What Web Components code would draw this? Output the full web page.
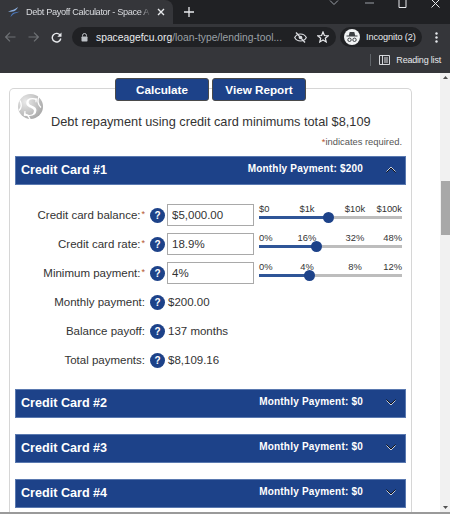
<!DOCTYPE html>
<html>
<head>
<meta charset="utf-8">
<style>
  html, body { margin: 0; height: 100%; overflow: hidden; background: #fff; }
  body { font-family: "Liberation Sans", Arial, sans-serif; color: #333; display: flex; flex-direction: column; height: 514px; }
</style>
</head>
<body>
<browser-chrome></browser-chrome>
<page-view>
  <calc-actions></calc-actions>
  <calc-card>
    <card-panel title-text="Credit Card #1" payment="Monthly Payment: $200" open>
      <field-row label="Credit card balance:" required value="$5,000.00" ticks="$0,$1k,$10k,$100k" pos="48.3"></field-row>
      <field-row label="Credit card rate:" required value="18.9%" ticks="0%,16%,32%,48%" pos="39.9"></field-row>
      <field-row label="Minimum payment:" required value="4%" ticks="0%,4%,8%,12%" pos="35"></field-row>
      <field-row label="Monthly payment:" result="$200.00"></field-row>
      <field-row label="Balance payoff:" result="137 months"></field-row>
      <field-row label="Total payments:" result="$8,109.16"></field-row>
    </card-panel>
    <card-panel title-text="Credit Card #2" payment="Monthly Payment: $0"></card-panel>
    <card-panel title-text="Credit Card #3" payment="Monthly Payment: $0"></card-panel>
    <card-panel title-text="Credit Card #4" payment="Monthly Payment: $0"></card-panel>
  </calc-card>
</page-view>

<script>
const chromeTemplate = document.createElement('template');
chromeTemplate.innerHTML = `
  <style>
    :host { display: block; flex: none; height: 73px; background: #35363a; color: #e8eaed; font-family: "Liberation Sans", sans-serif; font-size: 10px; }
    .tabs { height: 24px; background: #202124; display: flex; align-items: stretch; overflow: hidden; }
    .tab { width: 173px; background: #35363a; border-radius: 0 8px 0 0; display: flex; align-items: center; padding: 0 8px 0 8px; box-sizing: border-box; gap: 6px; }
    .tab .name { flex: 1; white-space: nowrap; color: #dadce0; font-size: 9.200px; letter-spacing: -.35px; -webkit-mask-image: linear-gradient(90deg, #000 92%, transparent); }
    .plus { width: 30px; display: flex; align-items: center; justify-content: center; margin-left: 1px; }
    .spacer { flex: 1; }
    .win { display: flex; align-items: center; height: 12px; gap: 22px; padding-right: 10px; margin-top: -3px; }
    .bar { height: 26px; display: flex; align-items: center; padding: 0 5px; }
    .nav { display: flex; gap: 12px; align-items: center; width: 67px; }
    .omni { width: 264px; height: 20px; background: #202124; border-radius: 10px; display: flex; align-items: center; padding: 0 7px 0 9px; box-sizing: border-box; gap: 8px; }
    .url { flex: 1; white-space: nowrap; color: #9aa0a6; font-size: 10.300px; }
    .url b { color: #e8eaed; font-weight: 400; }
    .omni .eye { margin-right: 2px; }
    .badge { margin-left: 4px; height: 20px; width: 82px; border-radius: 10px; background: #202124; display: flex; align-items: center; gap: 6px; padding-left: 4px; box-sizing: border-box; font-size: 9.200px; letter-spacing: -.1px; white-space: nowrap; }
    .dots { margin-left: 13px; }
    .marks { height: 23px; padding: 0 9px 3px 0; box-sizing: border-box; display: flex; justify-content: flex-end; align-items: center; font-size: 9px; letter-spacing: -.2px; }
    .sep { width: 1px; height: 12px; background: #5f6368; margin-right: 8px; }
    .marks svg { margin-right: 6px; }
  </style>
  <div class="tabs">
    <div class="tab">
      <svg width="12" height="10" viewBox="0 0 12 10"><path d="M0 5C2 3 5 3.500 7 2L10 0C9 2 8 3.500 6 4.200 4 4.800 2 4.600 0 5Z" fill="#8db1e2"/><path d="M12 4.500C10 6 7 5.800 5 7.500L2.500 10C3 8 4 6.500 6 5.600 8 4.800 10 5 12 4.500Z" fill="#4a78bd"/></svg>
      <span class="name">Debt Payoff Calculator - Space A</span>
      <svg width="8" height="8" viewBox="0 0 8 8"><path d="M1 1 7 7M7 1 1 7" stroke="#e8eaed" stroke-width="1.4"/></svg>
    </div>
    <div class="plus"><svg width="10" height="10" viewBox="0 0 10 10"><path d="M5 0V10M0 5H10" stroke="#e8eaed" stroke-width="1.3"/></svg></div>
    <div class="spacer"></div>
    <div class="win">
      <svg width="10" height="6" viewBox="0 0 10 6"><path d="M1 .5 5 4.500 9 .5" fill="none" stroke="#9aa0a6"/></svg>
      <svg width="9" height="2" viewBox="0 0 9 2" style="margin-left:4px"><path d="M0 1H9" stroke="#9aa0a6"/></svg>
      <svg width="9" height="9" viewBox="0 0 9 9" style="margin-left:2px"><path d="M1 .5H8V8.500H1Z" fill="none" stroke="#e8eaed"/></svg>
      <svg width="9" height="9" viewBox="0 0 9 9" style="margin-left:2px"><path d="M.5 .5 8.500 8.500M8.500 .5 .5 8.500" stroke="#e8eaed"/></svg>
    </div>
  </div>
  <div class="bar">
    <div class="nav">
      <svg width="11" height="10" viewBox="0 0 11 10"><path d="M10.500 5H1M5 .7.700 5 5 9.300" fill="none" stroke="#6e7175" stroke-width="1.2"/></svg>
      <svg width="11" height="10" viewBox="0 0 11 10"><path d="M.5 5H10M6 .7 10.300 5 6 9.300" fill="none" stroke="#6e7175" stroke-width="1.2"/></svg>
      <svg width="11" height="11" viewBox="0 0 11 11"><path d="M9.300 3.500A4.300 4.300 0 1 0 9.800 6.500" fill="none" stroke="#e8eaed" stroke-width="1.4"/><path d="M10.500 .5V4.700H6.300Z" fill="#e8eaed"/></svg>
    </div>
    <div class="omni">
      <svg width="7" height="9" viewBox="0 0 7 9" style="flex:none"><path d="M1.500 3.500V2.500A2 2 0 0 1 5.500 2.500V3.500" fill="none" stroke="#bdc1c6"/><rect x=".5" y="3.500" width="6" height="5" rx=".7" fill="#bdc1c6"/></svg>
      <span class="url"><b>spaceagefcu.org</b>/loan-type/lending-tool...</span>
      <svg class="eye" width="13" height="11" viewBox="0 0 13 11"><path d="M.7 5.500C2 3 4.200 2 6.500 2S11 3 12.300 5.500C11 8 8.800 9 6.500 9S2 8 .7 5.500Z" fill="none" stroke="#dadce0" stroke-width="1.200"/><circle cx="6.500" cy="5.500" r="1.800" fill="#dadce0"/><path d="M2 .5 11 10.500" stroke="#dadce0" stroke-width="1.300"/></svg>
      <svg width="12" height="12" viewBox="0 0 12 12"><path d="M6 1 7.400 4.500 11.200 4.800 8.300 7.200 9.200 10.900 6 8.900 2.800 10.900 3.700 7.200.8 4.800 4.600 4.500Z" fill="none" stroke="#e8eaed" stroke-width="1.200"/></svg>
    </div>
    <div class="badge">
      <svg width="16" height="16" viewBox="0 0 16 16"><circle cx="8" cy="8" r="8" fill="#f1f3f4"/><path d="M4.800 6.500 5.700 3H10.300L11.200 6.500H13.500V7.500H2.500V6.500Z" fill="#3c4043"/><circle cx="5.500" cy="10.800" r="1.700" fill="none" stroke="#3c4043"/><circle cx="10.500" cy="10.800" r="1.700" fill="none" stroke="#3c4043"/></svg>
      <span>Incognito (2)</span>
    </div>
    <svg class="dots" width="3" height="11" viewBox="0 0 3 11"><circle cx="1.500" cy="1.500" r="1.200" fill="#e8eaed"/><circle cx="1.500" cy="5.500" r="1.200" fill="#e8eaed"/><circle cx="1.500" cy="9.500" r="1.200" fill="#e8eaed"/></svg>
  </div>
  <div class="marks">
    <span class="sep"></span>
    <svg width="11" height="10" viewBox="0 0 11 10"><path d="M.5 .5H10.500V9.500H.5ZM3.500 .5V9.500M5 3H9M5 5H9M5 7H9" fill="none" stroke="#e8eaed" stroke-width=".9"/></svg>
    <span>Reading list</span>
  </div>
`;
class BrowserChrome extends HTMLElement {
  constructor() {
    super();
    this.attachShadow({ mode: 'open' }).appendChild(chromeTemplate.content.cloneNode(true));
  }
}
customElements.define('browser-chrome', BrowserChrome);

const pageTemplate = document.createElement('template');
pageTemplate.innerHTML = `
  <style>
    :host { display: flex; flex: none; height: 439px; background: #fff; overflow: hidden; border-bottom: 2px solid #9a9a9a; }
    .main { flex: 1; min-width: 0; padding: 5px 28px 0 9px; overflow: hidden; }
    .scroll { width: 10px; flex: none; background: #f1f1f1; display: flex; flex-direction: column; align-items: flex-end; }
    .arrow { width: 100%; height: 9px; flex: none; display: flex; align-items: center; justify-content: center; }
    .thumb { width: 9px; height: 54px; background: #a8a8a8; margin-top: 99px; flex: none; }
    .gap { flex: 1; }
  </style>
  <div class="main"><slot></slot></div>
  <div class="scroll">
    <div class="arrow"><svg width="5" height="3" viewBox="0 0 5 3"><path d="M0 3 2.500 0 5 3Z" fill="#505050"/></svg></div>
    <div class="thumb"></div>
    <div class="gap"></div>
    <div class="arrow"><svg width="5" height="3" viewBox="0 0 5 3"><path d="M0 0 2.500 3 5 0Z" fill="#505050"/></svg></div>
  </div>
`;
class PageView extends HTMLElement {
  constructor() {
    super();
    this.attachShadow({ mode: 'open' }).appendChild(pageTemplate.content.cloneNode(true));
  }
}
customElements.define('page-view', PageView);

const actionsTemplate = document.createElement('template');
actionsTemplate.innerHTML = `
  <style>
    :host { display: flex; justify-content: center; gap: 3px; position: relative; z-index: 1; margin-bottom: -13px; }
    button { font: bold 11.700px "Liberation Sans", Arial, sans-serif; width: 94px; height: 23px; padding: 0; color: #fff; background: #1d4289; border: 1px solid #4a4a4a; border-radius: 3px; box-sizing: border-box; }
  </style>
  <button>Calculate</button>
  <button>View Report</button>
`;
class CalcActions extends HTMLElement {
  constructor() {
    super();
    this.attachShadow({ mode: 'open' }).appendChild(actionsTemplate.content.cloneNode(true));
  }
}
customElements.define('calc-actions', CalcActions);

const cardTemplate = document.createElement('template');
cardTemplate.innerHTML = `
  <style>
    :host { display: block; border: 1px solid #d6d6d6; border-bottom: 0; border-radius: 5px 5px 0 0; padding: 0 5px; height: 460px; box-sizing: border-box; }
    .head { height: 67px; position: relative; }
    svg { position: absolute; left: 2px; top: 0; }
    h2 { margin: 0; padding: 24px 0 0 36px; font-weight: 400; font-size: 12.750px; line-height: 18px; color: #333; white-space: nowrap; position: relative; }
    .req { position: absolute; right: 4px; top: 47px; font-size: 9.400px; line-height: 12px; color: #555; white-space: nowrap; }
    .req i { color: #b5552f; font-style: normal; }
    .logo-s { font: italic 28px "Liberation Serif", serif; fill: #fff; }
  </style>
  <div class="head">
    <svg width="27" height="35" viewBox="0 0 27 35">
      <defs>
        <radialGradient id="g" cx=".3" cy=".3" r=".85"><stop offset="0" stop-color="#e9e9e9"/><stop offset=".55" stop-color="#c4c4c4"/><stop offset="1" stop-color="#a2a2a2"/></radialGradient>
        <filter id="b"><feGaussianBlur stdDeviation=".35"/></filter>
      </defs>
      <g filter="url(#b)">
        <circle cx="13.500" cy="17.500" r="12.500" fill="url(#g)"/>
        <path d="M22 7.500C20 11.500 20 14.500 24 18.500M3 11.500C5 15.500 4 19.500 2 21.500M7 26.500C10 24.500 11 26.500 13 30" fill="none" stroke="#fff" stroke-width="1.300"/>
        <text class="logo-s" x="6.500" y="26.500">S</text>
      </g>
    </svg>
    <h2>Debt repayment using credit card minimums total $8,109</h2>
    <div class="req"><i>*</i>indicates required.</div>
  </div>
  <slot></slot>
`;
class CalcCard extends HTMLElement {
  constructor() {
    super();
    this.attachShadow({ mode: 'open' }).appendChild(cardTemplate.content.cloneNode(true));
  }
}
customElements.define('calc-card', CalcCard);

const panelTemplate = document.createElement('template');
panelTemplate.innerHTML = `
  <style>
    :host { display: block; margin-bottom: 16.500px; }
    .bar { height: 28.500px; box-sizing: border-box; background: #1d4289; border: 1px solid #5a79b0; display: flex; align-items: center; color: #fff; font-weight: bold; padding: 0 9px 0 5px; }
    .title { flex: 1; font-size: 12.600px; }
    .pay { font-size: 10px; margin-right: 23px; letter-spacing: .2px; margin-top: -3px; }
    .rows { display: none; padding: 16px 0 0; margin-bottom: -2px; }
    :host([open]) .rows { display: block; }
    svg { fill: none; stroke: #111; filter: drop-shadow(0 1px 0 #c5cde0); }
    :host(:not([open])) svg { margin-top: -3px; }
    :host([open]) svg { filter: drop-shadow(0 -1px 0 #c5cde0); }
  </style>
  <div class="bar">
    <span class="title"></span>
    <span class="pay"></span>
    <svg width="10" height="6" viewBox="0 0 10 6"></svg>
  </div>
  <div class="rows"><slot></slot></div>
`;
class CardPanel extends HTMLElement {
  constructor() {
    super();
    const root = this.attachShadow({ mode: 'open' });
    root.appendChild(panelTemplate.content.cloneNode(true));
    root.querySelector('.title').textContent = this.getAttribute('title-text');
    root.querySelector('.pay').textContent = this.getAttribute('payment');
    root.querySelector('svg').innerHTML = this.hasAttribute('open')
      ? '<path d="M.5 5.500 5 1 9.500 5.500"/>'
      : '<path d="M.5 .5 5 5 9.500 .5"/>';
  }
}
customElements.define('card-panel', CardPanel);

const rowTemplate = document.createElement('template');
rowTemplate.innerHTML = `
  <style>
    :host { display: grid; grid-template-columns: 135px 17px 92px 1fr; align-items: center; height: 29px; font-size: 11.500px; color: #333; }
    .label { text-align: right; white-space: nowrap; padding-right: 5px; margin-top: -1px; }
    .label i { color: #b5552f; font-style: normal; font-size: 9px; vertical-align: 2px; margin-left: 1px; }
    .help { width: 15px; height: 15px; border-radius: 50%; background: #1d4289; color: #fff; font-weight: bold; font-size: 10px; line-height: 15px; text-align: center; }
    input { font: 11.500px "Liberation Sans", Arial, sans-serif; color: #333; width: 87px; height: 22px; box-sizing: border-box; border: 1px solid #a9a9a9; padding: 0 4px; margin: 0; outline: 0; }
    .result { grid-column: 3 / 5; white-space: nowrap; margin-left: 1px; }
    .slider { align-self: start; padding: 2px 4px 0 0; }
    .ticks { display: grid; grid-template-columns: 24px 48px 48px 23px; font-size: 9.400px; line-height: 11px; color: #333; }
    .ticks span { justify-self: center; white-space: nowrap; }
    .ticks span:first-child { justify-self: start; }
    .ticks span:last-child { justify-self: end; }
    .track { position: relative; height: 3px; background: #bdbdbd; margin-top: 2.500px; }
    .fill { position: absolute; left: 0; top: 0; bottom: 0; background: #2f5597; }
    .knob { position: absolute; top: -4px; width: 11px; height: 11px; margin-left: -5.500px; border-radius: 50%; background: #1d4289; }
  </style>
  <span class="label"></span>
  <span class="help">?</span>
`;
class FieldRow extends HTMLElement {
  constructor() {
    super();
    const root = this.attachShadow({ mode: 'open' });
    root.appendChild(rowTemplate.content.cloneNode(true));
    const label = root.querySelector('.label');
    label.textContent = this.getAttribute('label');
    if (this.hasAttribute('required')) {
      const star = document.createElement('i');
      star.textContent = '*';
      label.appendChild(star);
    }
    if (this.hasAttribute('result')) {
      const out = document.createElement('span');
      out.className = 'result';
      out.textContent = this.getAttribute('result');
      root.appendChild(out);
      return;
    }
    const input = document.createElement('input');
    input.setAttribute('value', this.getAttribute('value'));
    root.appendChild(input);
    const slider = document.createElement('div');
    slider.className = 'slider';
    const pos = this.getAttribute('pos');
    const ticks = this.getAttribute('ticks').split(',').map(t => `<span>${t}</span>`).join('');
    slider.innerHTML = `<div class="ticks">${ticks}</div><div class="track"><div class="fill" style="width:${pos}%"></div><div class="knob" style="left:${pos}%"></div></div>`;
    root.appendChild(slider);
  }
}
customElements.define('field-row', FieldRow);
</script>
</body>
</html>
